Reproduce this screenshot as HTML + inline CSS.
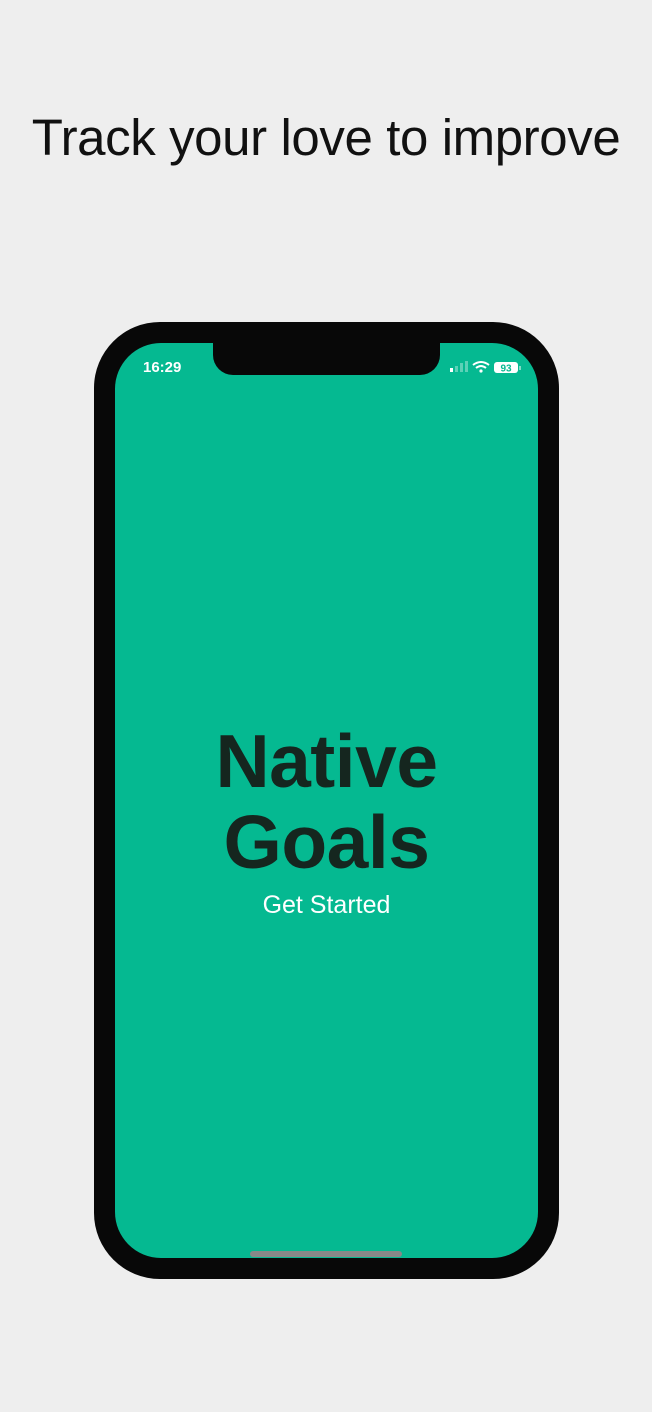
<!DOCTYPE html>
<html><head><style>
body{margin:0;width:652px;height:1412px;background:#eeeeee;position:relative;overflow:hidden;font-family:"Liberation Sans",sans-serif}
.t{position:absolute;top:108px;left:0;width:652px;text-align:center;font-size:51px;color:#111;letter-spacing:-0.4px}
.ph{position:absolute;left:94px;top:322px;width:465px;height:957px;background:#080808;border-radius:66px}
.sc{position:absolute;left:21px;top:21px;width:423px;height:915px;background:#05b991;border-radius:46px;overflow:hidden}
.notch{position:absolute;left:98px;top:0;width:227px;height:32px;background:#080808;border-radius:0 0 20px 20px}
.time{position:absolute;left:28px;top:16px;color:#fff;font-weight:bold;font-size:15px}
.home{position:absolute;left:135px;top:908px;width:152px;height:6px;background:#888;border-radius:3px}
.n{position:absolute;left:0;width:423px;text-align:center;font-weight:900;font-size:75px;line-height:1;color:#15261f;letter-spacing:-0.5px}
.gs{position:absolute;left:0;top:548px;width:423px;text-align:center;color:#fff;font-size:25px}
</style></head><body>
<div class="t">Track your love to improve</div>
<div class="ph"><div class="sc">
<div class="notch"></div>
<div class="time">16:29</div>
<svg style="position:absolute;left:334px;top:16px" width="80" height="16">
<rect x="1" y="9" width="3" height="4" fill="#fff"/><rect x="6" y="7" width="3" height="6" fill="#fff" opacity=".35"/><rect x="11" y="4" width="3" height="9" fill="#fff" opacity=".35"/><rect x="16" y="2" width="3" height="11" fill="#fff" opacity=".35"/>
<path d="M24 6 Q32 0 40 6 M27 9 Q32 5 37 9" stroke="#fff" stroke-width="2" fill="none"/><circle cx="32" cy="12" r="1.6" fill="#fff"/>
<rect x="45" y="3" width="24" height="11" rx="3" fill="#fff"/><text x="57" y="12.5" font-size="10" font-weight="bold" text-anchor="middle" fill="#05b991" font-family="Liberation Sans">93</text>
<rect x="70" y="7" width="2" height="4" fill="#fff" opacity=".5"/></svg>
<div class="n" style="top:381px">Native</div>
<div class="n" style="top:462px">Goals</div>
<div class="gs">Get Started</div>
<div class="home"></div>
</div></div>
</body></html>
